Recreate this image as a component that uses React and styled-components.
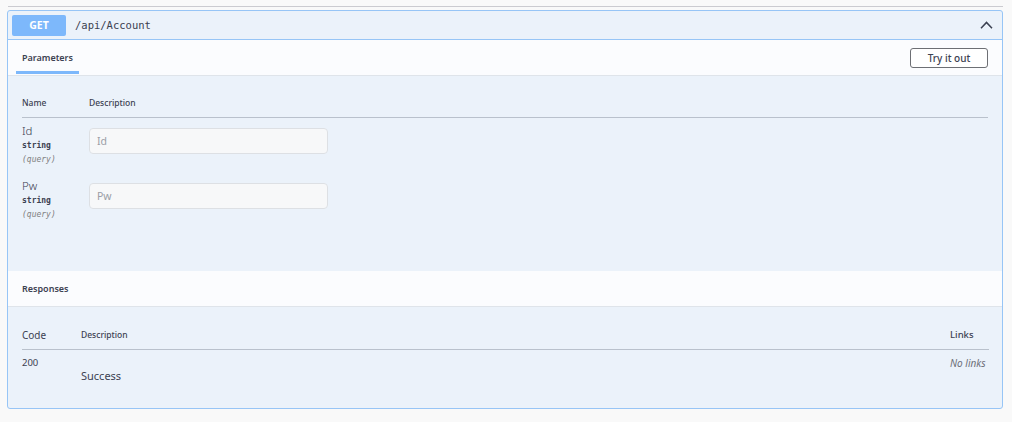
import React from "react";
import styled, { createGlobalStyle } from "styled-components";

const Global = createGlobalStyle`
  html, body { margin: 0; padding: 0; background: #f9f9f9; }
  body { font-family: "Noto Sans", "Open Sans", sans-serif; color: #3b4151; }
  * { box-sizing: border-box; }
`;

const Page = styled.div`
  width: 1012px;
  height: 422px;
  padding: 6px 9px 0 7px;
`;

const TagRule = styled.div`
  height: 1px;
  background: #cbcbd0;
  margin: 0 0 3px 1px;
`;

const OpBlock = styled.div`
  border: 1px solid #97c5f6;
  border-radius: 3px;
  background: #ebf2fa;
  overflow: hidden;
`;

const Summary = styled.div`
  display: flex;
  align-items: center;
  height: 29px;
  padding: 0 5px 0 4px;
  border-bottom: 1px solid #97c5f6;
`;

const Method = styled.span`
  width: 54px;
  height: 21px;
  border-radius: 2px;
  background: #7db8fb;
  color: #fff;
  font-size: 10.5px;
  font-weight: 700;
  display: flex;
  align-items: center;
  justify-content: center;
`;

const Path = styled.span`
  margin-left: 9px;
  font-family: "DejaVu Sans Mono", monospace;
  font-size: 10.5px;
  color: #3b4151;
  flex: 1;
`;

const Chevron = styled.svg`
  width: 13px;
  height: 8px;
  margin-right: 4px;
`;

const SectionHeader = styled.div`
  display: flex;
  align-items: center;
  justify-content: space-between;
  height: 36px;
  padding: 0 14px 0 8px;
  background: #fbfcfe;
  border-bottom: 1px solid #dfe4ea;
`;

const Tab = styled.div`
  align-self: stretch;
  display: flex;
  align-items: center;
  padding: 3px 6px 0;
  font-size: 9px;
  font-weight: 600;
  color: #3b4151;
  border-bottom: 3px solid ${(p) => (p.$active ? "#7db8fb" : "transparent")};
  margin-bottom: 1px;
`;

const Title = styled.div`
  font-size: 9px;
  font-weight: 600;
  color: #3b4151;
  padding-left: 6px;
`;

const TryButton = styled.button`
  width: 78px;
  height: 20px;
  border: 1.5px solid #6d6f74;
  border-radius: 3px;
  background: #fff;
  font-family: inherit;
  font-size: 10px;
  font-weight: 500;
  color: #3b4151;
  padding: 0;
`;

const ParamBody = styled.div`
  padding: 20px 14px 43px 14px;
`;

const ParamGrid = styled.div`
  display: grid;
  grid-template-columns: 67px 1fr;
`;

const HeadCell = styled.div`
  font-size: ${(p) => p.$size || 8.5}px;
  font-weight: ${(p) => p.$weight || 500};
  line-height: 14px;
  padding-bottom: 7px;
  border-bottom: 1px solid #b9c1cc;
  color: #3b4151;
  text-align: ${(p) => p.$align || "left"};
`;

const NameCell = styled.div`
  padding: 6px 0 5px;
  height: 55px;
  display: flex;
  flex-direction: column;
`;

const ParamName = styled.div`
  font-size: 11.5px;
  font-weight: 300;
  line-height: 13px;
  color: #3b4151;
`;

const ParamType = styled.div`
  margin-top: 2px;
  font-family: "DejaVu Sans Mono", monospace;
  font-size: 8px;
  font-weight: 700;
  line-height: 14px;
  color: #3b4151;
`;

const ParamIn = styled.div`
  font-family: "DejaVu Sans Mono", monospace;
  font-size: 8px;
  font-style: italic;
  line-height: 14px;
  color: #808080;
`;

const DescCell = styled.div`
  padding: 10px 0 0;
`;

const Input = styled.input`
  width: 239px;
  height: 26px;
  border: 1px solid #dde0e4;
  border-radius: 4px;
  background: #f7f8f9;
  padding: 0 7px;
  font-family: inherit;
  font-size: 10.5px;
  color: #3b4151;
  outline: none;
  &::placeholder { color: #9a9ea6; }
`;

const RespBody = styled.div`
  padding: 19px 13px 25px 14px;
`;

const RespGrid = styled.div`
  display: grid;
  grid-template-columns: 59px 1fr 39px;
`;

const RespHead = styled(HeadCell)`
  line-height: 18px;
  padding-bottom: 5px;
`;

const Code = styled.div`
  padding-top: 7px;
  font-size: 9.5px;
  line-height: 12px;
  color: #3b4151;
`;

const Success = styled.div`
  padding-top: 19px;
  font-size: 11px;
  line-height: 14px;
  color: #3b4151;
`;

const NoLinks = styled.div`
  padding-top: 7px;
  font-size: 10px;
  line-height: 12px;
  font-style: italic;
  color: #6b6f78;
  white-space: nowrap;
`;

const params = [
  { name: "Id", type: "string", loc: "(query)" },
  { name: "Pw", type: "string", loc: "(query)" },
];

export default function App() {
  return (
    <>
      <Global />
      <Page>
        <TagRule />
        <OpBlock>
          <Summary>
            <Method>GET</Method>
            <Path>/api/Account</Path>
            <Chevron viewBox="0 0 13 8" fill="none">
              <path d="M1 7.2 L6.5 1.4 L12 7.2" stroke="#3b4151" strokeWidth="1.5" />
            </Chevron>
          </Summary>
          <SectionHeader>
            <Tab $active>Parameters</Tab>
            <TryButton>Try it out</TryButton>
          </SectionHeader>
          <ParamBody>
            <ParamGrid>
              <HeadCell>Name</HeadCell>
              <HeadCell>Description</HeadCell>
              {params.map((p) => (
                <React.Fragment key={p.name}>
                  <NameCell>
                    <ParamName>{p.name}</ParamName>
                    <ParamType>{p.type}</ParamType>
                    <ParamIn>{p.loc}</ParamIn>
                  </NameCell>
                  <DescCell>
                    <Input placeholder={p.name} />
                  </DescCell>
                </React.Fragment>
              ))}
            </ParamGrid>
          </ParamBody>
          <SectionHeader>
            <Title>Responses</Title>
          </SectionHeader>
          <RespBody>
            <RespGrid>
              <RespHead $size={10} $weight={400}>Code</RespHead>
              <RespHead>Description</RespHead>
              <RespHead $size={9.5}>Links</RespHead>
              <Code>200</Code>
              <Success>Success</Success>
              <NoLinks>No links</NoLinks>
            </RespGrid>
          </RespBody>
        </OpBlock>
      </Page>
    </>
  );
}
